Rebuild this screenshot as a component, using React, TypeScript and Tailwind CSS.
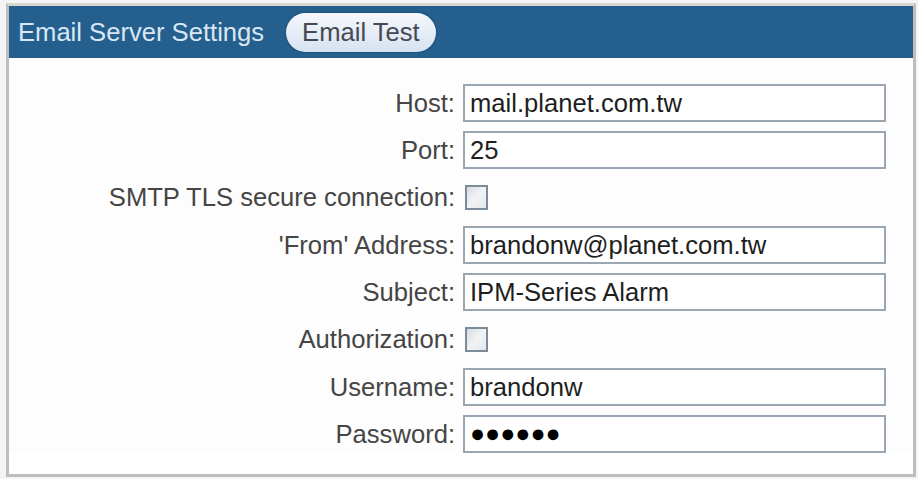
import React from "react";

type Field =
  | { kind: "text"; label: string; value: string }
  | { kind: "password"; label: string; value: string }
  | { kind: "check"; label: string; checked: boolean };

const FIELDS: Field[] = [
  { kind: "text", label: "Host:", value: "mail.planet.com.tw" },
  { kind: "text", label: "Port:", value: "25" },
  { kind: "check", label: "SMTP TLS secure connection:", checked: false },
  { kind: "text", label: "'From' Address:", value: "brandonw@planet.com.tw" },
  { kind: "text", label: "Subject:", value: "IPM-Series Alarm" },
  { kind: "check", label: "Authorization:", checked: false },
  { kind: "text", label: "Username:", value: "brandonw" },
  { kind: "password", label: "Password:", value: "secret" },
];

function FieldControl({ field }: { field: Field }) {
  if (field.kind === "check") {
    return (
      <div className="flex h-[38px] items-center">
        <span className="ml-[2px] block h-[25px] w-[23px] border-2 border-[#7c8b99] bg-gradient-to-br from-[#d9dde2] via-[#f1f3f5] to-[#e4e8ec]" />
      </div>
    );
  }
  return (
    <div className="flex h-[38px] w-[423px] items-center border-2 border-[#9aa7b3] bg-white px-[5px] text-[25.6px] text-[#1e1e1e]">
      {field.kind === "password" ? (
        <span className="text-[25px] tracking-[0px] text-black">{"●".repeat(6)}</span>
      ) : (
        field.value
      )}
    </div>
  );
}

export default function App() {
  return (
    <div
      className="h-[479px] w-[918px] overflow-hidden bg-[#f4f4f4] pl-[6px] pr-[2px] pt-[3px]"
      style={{ fontFamily: '"Liberation Sans", Arial, sans-serif' }}
    >
      <div className="h-[474px] border-[3px] border-[#bdbdbd] border-t-[#d9d6d0] bg-white">
        {/* title bar */}
        <div className="flex h-[52px] items-center bg-[#245f8e] pl-[9px]">
          <span className="text-[25.6px] text-[#d9e7f4]">Email Server Settings</span>
          <button
            type="button"
            className="ml-[22px] h-[39px] rounded-full bg-gradient-to-b from-[#f5f8fc] to-[#d6e2f1] px-[16px] text-[25.6px] text-[#454a52] shadow-[0_0_2px_#0b3558]"
          >
            Email Test
          </button>
        </div>

        {/* form rows */}
        <div className="grid grid-cols-[446px_auto] gap-x-[8px] gap-y-[9.3px] bg-[#fdfdfd] pt-[26px] text-[25.6px] text-[#454545]">
          {FIELDS.map((f) => (
            <React.Fragment key={f.label}>
              <label className="flex h-[38px] items-center justify-end whitespace-nowrap">
                {f.label}
              </label>
              <FieldControl field={f} />
            </React.Fragment>
          ))}
        </div>
      </div>
    </div>
  );
}
